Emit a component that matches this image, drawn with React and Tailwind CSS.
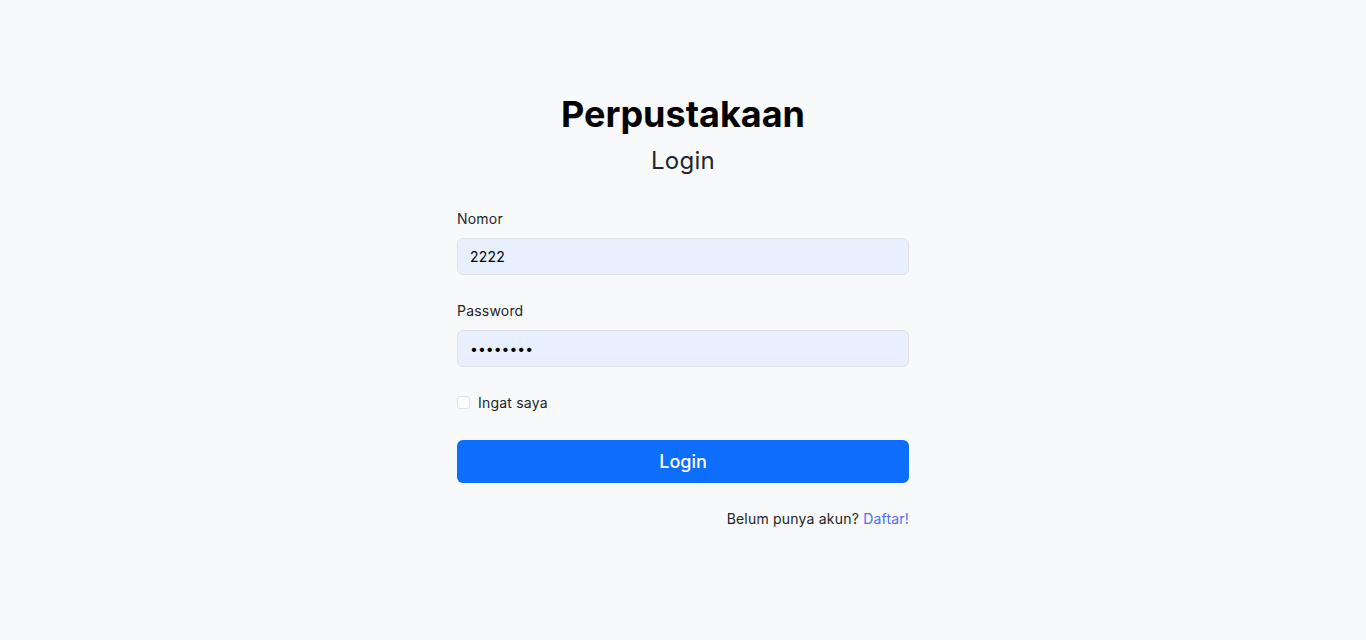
export default function App() {
  return (
    <div className="min-h-screen bg-[#f8f9fa] flex justify-center" style={{ fontFamily: 'Inter, "Noto Sans", sans-serif' }}>
      <div className="w-[452px] pt-[94px]">
        <h1 className="text-[36px] leading-[40px] font-bold text-center text-black">Perpustakaan</h1>
        <h2 className="mt-[11px] text-[24px] leading-[32px] tracking-[0.3px] text-center text-[#212529]">Login</h2>
        <form className="mt-[31px]" onSubmit={(e) => e.preventDefault()}>
          <label className="block text-[14px] leading-[21px] tracking-[0.2px] text-[#212529] mb-[9px]">Nomor</label>
          <input
            type="text"
            defaultValue="2222"
            className="block w-full h-[37px] rounded-md border border-[#dee2e6] bg-[#e8f0fe] px-3 text-[14px] tracking-[0.2px] text-black outline-none"
          />
          <label className="block mt-[25px] text-[14px] leading-[21px] tracking-[0.2px] text-[#212529] mb-[9px]">Password</label>
          <input
            type="password"
            defaultValue="password"
            className="block w-full h-[37px] rounded-md border border-[#dee2e6] bg-[#e8f0fe] px-3 text-[14px] text-black outline-none"
          />
          <div className="mt-[25px] flex items-center gap-2">
            <input type="checkbox" className="appearance-none w-[13px] h-[13px] rounded-[3px] border border-[#dee2e6] bg-white" />
            <span className="text-[14px] leading-[21px] tracking-[0.2px] text-[#212529]">Ingat saya</span>
          </div>
          <button
            type="submit"
            className="mt-[27px] w-full h-[43px] rounded-md bg-[#0d6efd] text-white text-[18px] font-medium"
          >
            Login
          </button>
          <p className="mt-[25px] text-right text-[14px] leading-[21px] tracking-[0.2px] text-[#212529]">
            Belum punya akun? <a href="#" className="text-[#4f6ef7]">Daftar!</a>
          </p>
        </form>
      </div>
    </div>
  );
}
